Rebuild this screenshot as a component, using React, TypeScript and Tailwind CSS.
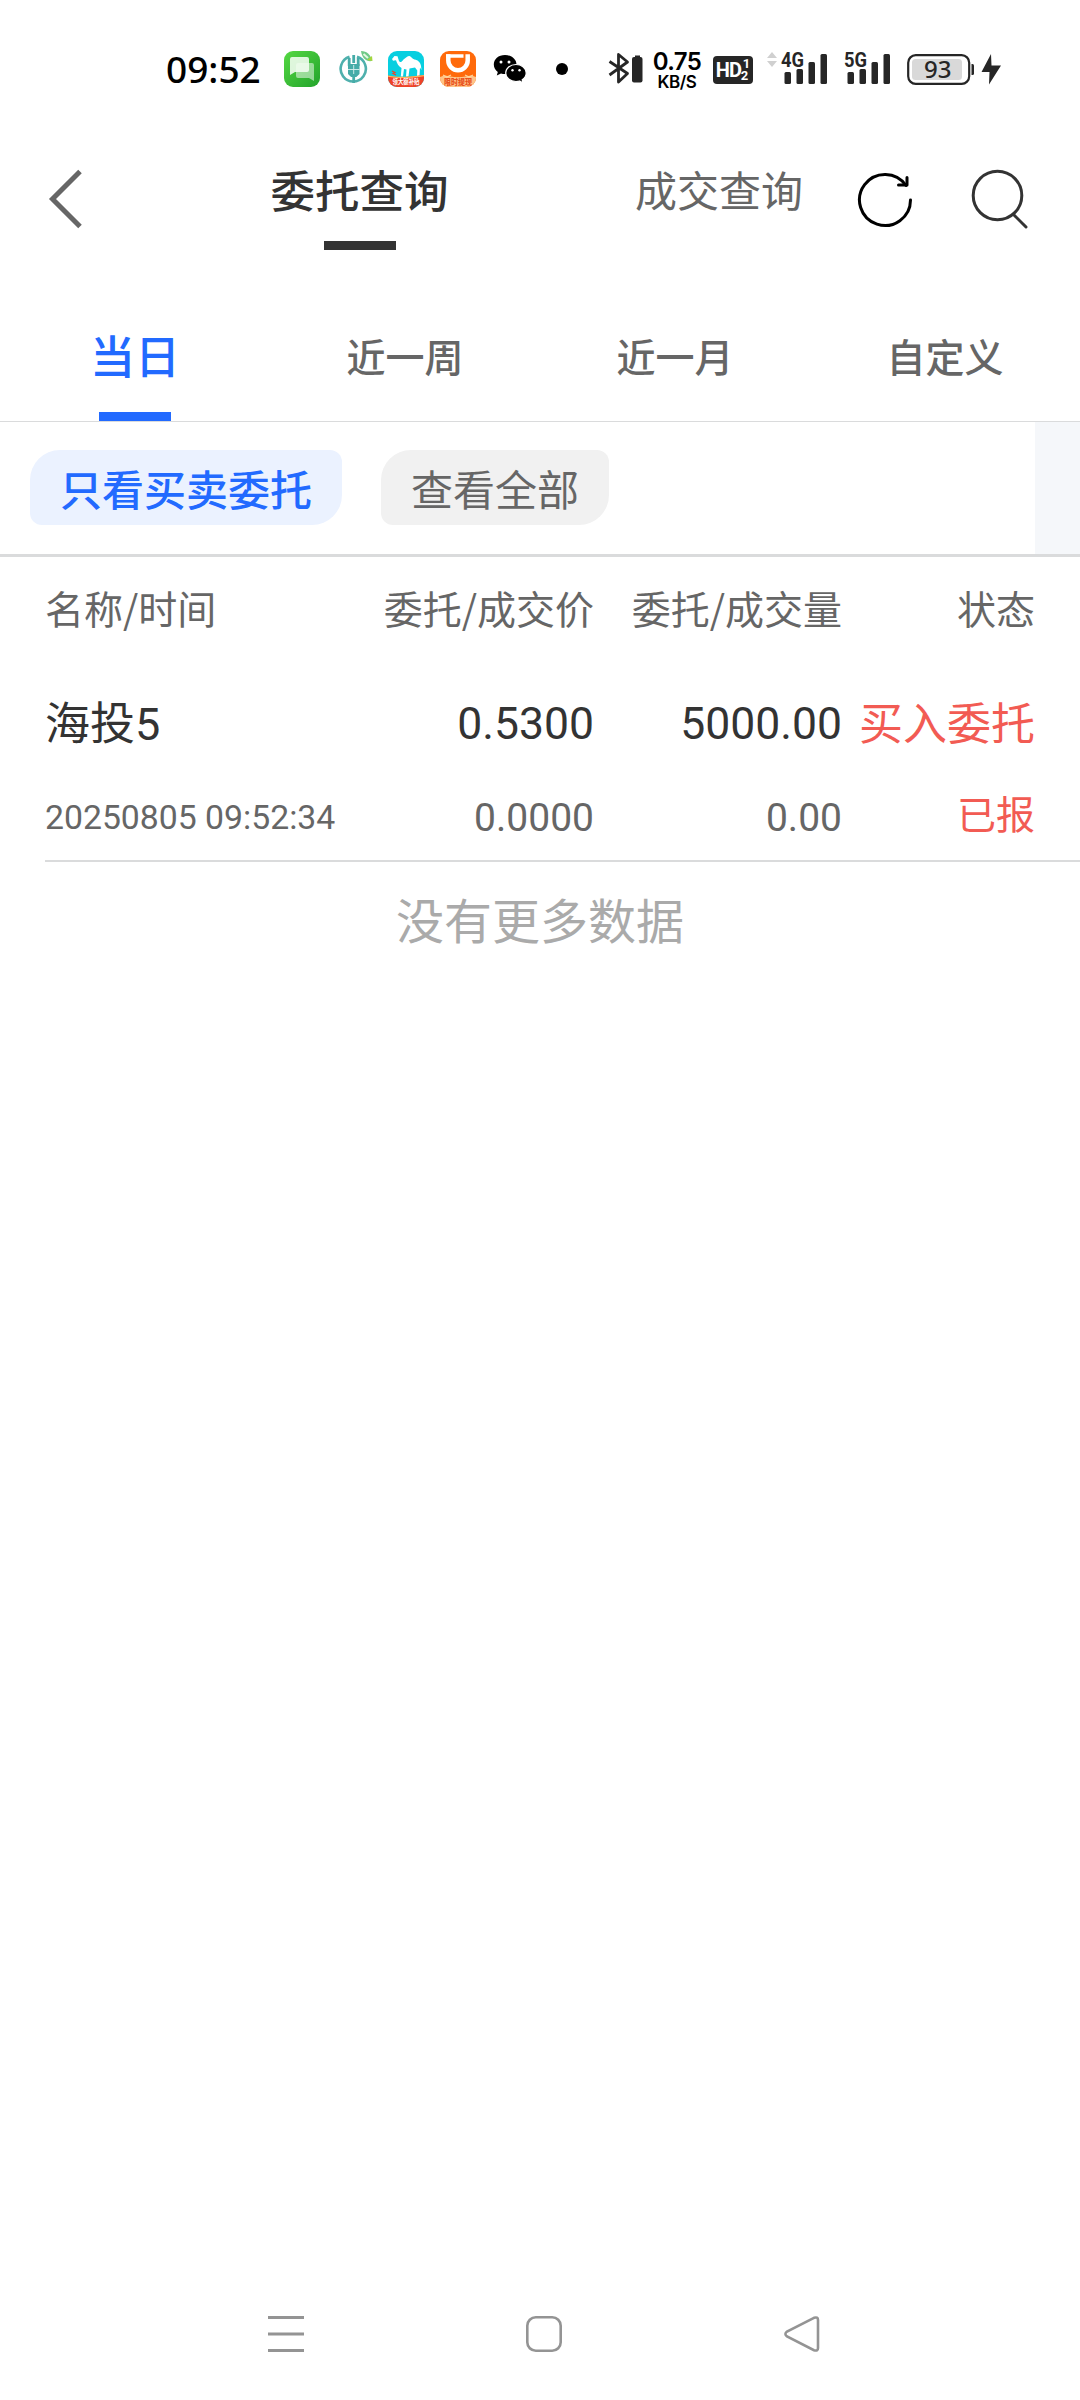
import { ReactNode, useState } from 'react';
import clsx from 'clsx';

type Order = {
  name: string;
  time: string;
  price: string;
  dealPrice: string;
  amount: string;
  dealAmount: string;
  side: string;
  status: string;
};

const periods = ['当日', '近一周', '近一月', '自定义'];
const filters = ['只看买卖委托', '查看全部'];

const orders: Order[] = [
  {
    name: '海投5',
    time: '20250805 09:52:34',
    price: '0.5300',
    dealPrice: '0.0000',
    amount: '5000.00',
    dealAmount: '0.00',
    side: '买入委托',
    status: '已报',
  },
];

/* STATUS BAR ICONS */
const MessageIcon = () => (
  <svg className="ml-[22px] shrink-0" width="36" height="36" viewBox="0 0 36 36">
    <defs>
      <linearGradient id="msg" x1="0" y1="0" x2="1" y2="1">
        <stop offset="0" stopColor="#55d843" />
        <stop offset="1" stopColor="#22a32b" />
      </linearGradient>
    </defs>
    <rect width="36" height="36" rx="9" fill="url(#msg)" />
    <path
      d="M14 12h14a2 2 0 0 1 2 2v16l-5-3H14a2 2 0 0 1-2-2V14a2 2 0 0 1 2-2z"
      fill="#fff"
      opacity="0.5"
    />
    <path
      d="M8 6h15a2 2 0 0 1 2 2v11a2 2 0 0 1-2 2H11l-5 3V8a2 2 0 0 1 2-2z"
      fill="#f4fdf2"
      opacity="0.88"
    />
  </svg>
);

const BankIcon = () => (
  <svg className="ml-[19px] shrink-0" width="34" height="36" viewBox="0 0 34 36">
    <path
      d="M10.5 5.8A12.6 12.6 0 1 0 18 5.8"
      fill="none"
      stroke="#4fb0ad"
      strokeWidth="2.6"
    />
    <path
      d="M10.2 7v8M14.7 22v10M19.2 7v8M14.7 4v8"
      fill="none"
      stroke="#46aca8"
      strokeWidth="2.8"
    />
    <path d="M9 13h11.5v10l-3.2 3h-5.2L9 23z" fill="#46aca8" />
    <path d="M9 18.5h11.5M14.7 14v9" stroke="#d9f0ef" strokeWidth="0.9" />
    <path d="M22 0c6 0 10 4 11 10-6 1-10-3-11-10z" fill="#6fc987" />
    <path d="M28 9l5-4 .5 5z" fill="#a5d63c" />
    <path d="M24.5 3l4.5 4" stroke="#e3f7e2" strokeWidth="2" />
  </svg>
);

const CamelIcon = () => (
  <svg className="ml-[15px] shrink-0" width="36" height="36" viewBox="0 0 36 36">
    <defs>
      <clipPath id="camel">
        <rect width="36" height="36" rx="9" />
      </clipPath>
    </defs>
    <g clipPath="url(#camel)">
      <rect width="36" height="36" fill="#08cfe0" />
      <path
        d="M4 8L6.5 5 9.5 5.2 11 10C12 12 14 11 15.5 8.5 17.500 7.500 19 4.500 21.500 5 23.500 5.500 24 8 26.500 8.500 30 9 32.500 11.500 33 15L33.500 19 32 16.500 31.500 25H29L29.300 19.500 27 16.500 21.500 17.500 20.500 25.500H18L18.500 18.500 16 18 15 25.500H12.800L13.500 17C10.500 15.500 9 12.500 8 9.300L5 9.800z"
        fill="#fff"
      />
      <path d="M0 24.500c10 3 22 1.500 36-.5v12H0z" fill="#ee4328" />
      <path d="M0 24.500c10 2.500 24 1 36-.5v1.200c-12 2-26 2.500-36 .5z" fill="#ffb45a" />
      <path d="M4 20l3 1.500-2 1 3 1.500" stroke="#ee4328" strokeWidth="1.200" fill="none" />
      <text
        x="18"
        y="33"
        fontSize="6.5"
        fontWeight="700"
        textAnchor="middle"
        textLength="27"
        lengthAdjust="spacingAndGlyphs"
        fill="#fff"
        className="font-['Noto_Sans_CJK_SC',sans-serif]"
      >
        领大额补贴
      </text>
    </g>
  </svg>
);

const RideIcon = () => (
  <svg className="ml-[16px] shrink-0" width="36" height="36" viewBox="0 0 36 36">
    <defs>
      <clipPath id="ride">
        <rect width="36" height="36" rx="9" />
      </clipPath>
    </defs>
    <g clipPath="url(#ride)">
      <rect width="36" height="36" fill="#ff6a0b" />
      <path
        d="M8.300 3.200V9.500a9.700 9.700 0 0 0 19.400 0V3.200"
        fill="none"
        stroke="#fff"
        strokeWidth="4.500"
      />
      <path d="M6.100 3.200H23.500V6.800H6.100z" fill="#fff" />
      <path d="M0 26c6-3 9 0 18 0s12-3 18 0v10H0z" fill="#ffc488" />
      <path d="M3 24l4 2 4-2M33 24l-4 2-4-2" stroke="#ffd49c" strokeWidth="1.200" fill="none" />
      <text
        x="18"
        y="33.5"
        fontSize="7.5"
        fontWeight="900"
        textAnchor="middle"
        textLength="28"
        lengthAdjust="spacingAndGlyphs"
        fill="#e8501a"
        className="font-['Noto_Sans_CJK_SC',sans-serif]"
      >
        限时提现
      </text>
    </g>
  </svg>
);

const WechatIcon = () => (
  <svg className="ml-[17px] shrink-0" width="34" height="36" viewBox="0 0 34 36">
    <path
      d="M12 4C5.4 4 .8 8.2.8 13.6c0 3.200 1.600 5.600 4 7.400L3.800 24.500l4.200-2c1.300.4 2.600.6 4 .6 6.600 0 11.500-4.200 11.500-9.500S18.600 4 12 4z"
      fill="#000"
    />
    <path
      d="M23 13.500c-5.800 0-10.300 3.700-10.300 8.500s4.500 8.500 10.300 8.500c1.300 0 2.500-.2 3.600-.5l3.400 2-.8-3.200c2.400-1.600 4-3.900 4-6.800 0-4.800-4.400-8.500-10.200-8.500z"
      fill="#000"
      stroke="#fff"
      strokeWidth="1.200"
    />
    <circle cx="8" cy="11" r="1.500" fill="#fff" />
    <circle cx="16" cy="11" r="1.500" fill="#fff" />
    <circle cx="19.500" cy="19.200" r="1.200" fill="#fff" />
    <circle cx="26.500" cy="19.200" r="1.200" fill="#fff" />
  </svg>
);

const BluetoothIcon = () => (
  <svg className="ml-[40px] shrink-0" width="35" height="36" viewBox="0 0 35 36">
    <path
      d="M1.500 10.500l18 12-9 8.500V3.500l9 7.500-18 13"
      fill="none"
      stroke="#262626"
      strokeWidth="2.800"
      strokeLinejoin="round"
    />
    <rect x="24" y="6" width="10.500" height="25.500" rx="2" fill="#262626" />
    <rect x="27" y="4.500" width="5" height="2" fill="#262626" />
  </svg>
);

const SignalIcon = ({ label, className }: { label: string; className: string }) => (
  <svg className={clsx('shrink-0 overflow-visible', className)} width="47" height="36" viewBox="0 0 47 36">
    <text
      x="0"
      y="16"
      fontSize="20.500"
      fontWeight="700"
      textLength="23"
      lengthAdjust="spacingAndGlyphs"
      fill="#262626"
      className="font-[Roboto,sans-serif]"
    >
      {label}
    </text>
    <g fill="#262626">
      <rect x="3.500" y="21" width="6.500" height="12" rx="1.500" />
      <rect x="15.500" y="18" width="6.500" height="15" rx="1.500" />
      <rect x="27.500" y="11" width="6.500" height="22" rx="1.500" />
      <rect x="39.500" y="3" width="6.500" height="30" rx="1.500" />
    </g>
  </svg>
);

const BatteryIcon = () => (
  <svg className="ml-[16px] shrink-0" width="96" height="36" viewBox="0 0 96 36">
    <rect
      x="1.200"
      y="4.200"
      width="61"
      height="28.600"
      rx="7.500"
      fill="none"
      stroke="#262626"
      strokeWidth="2.200"
    />
    <rect x="5" y="8" width="50" height="21" rx="3.500" fill="#d9d9d9" />
    <path d="M64.500 13h1a1.500 1.500 0 0 1 1.500 1.500v8a1.500 1.500 0 0 1-1.500 1.500h-1z" fill="#262626" />
    <text
      x="17"
      y="27"
      fontSize="24"
      fontWeight="500"
      textLength="27.5"
      lengthAdjust="spacingAndGlyphs"
      fill="#262626"
      className="font-['Noto_Sans',sans-serif]"
    >
      93
    </text>
    <path d="M84 3L74.500 21h8l-.5 12.500L94 14.500h-9.500z" fill="#262626" />
  </svg>
);

const StatusBar = () => (
  <div className="flex h-[140px] items-start pt-[51px] pl-[166px] text-black">
    <span className="-mt-px w-[96px] shrink-0 font-['Noto_Sans',sans-serif] text-[37px] leading-[37px] font-medium">
      09:52
    </span>
    <MessageIcon />
    <BankIcon />
    <CamelIcon />
    <RideIcon />
    <WechatIcon />
    <span className="mt-3 ml-[29px] h-3 w-3 shrink-0 rounded-full bg-black" />
    <BluetoothIcon />
    <span className="ml-[10px] flex w-[48px] shrink-0 flex-col items-center font-[Inter,sans-serif] font-semibold">
      <span className="text-[24px] leading-[22px] tracking-tight">0.75</span>
      <span className="text-[17px] leading-[18px] tracking-tight">KB/S</span>
    </span>
    <div className="mt-[5px] ml-[12px] flex h-7 w-10 shrink-0 items-center justify-center bg-[#262626] rounded font-[Roboto,sans-serif] font-bold text-white">
      <span className="w-[25px] text-[20px] leading-7 tracking-[-1px]">HD</span>
      <span className="flex flex-col text-[13px] leading-[12px]">
        <span className="pl-0.5">1</span>
        <span>2</span>
      </span>
    </div>
    <svg className="ml-[14px] shrink-0" width="10" height="36" viewBox="0 0 10 36">
      <path d="M5 1l5 6H0zM5 16l5-6H0z" fill="#d0d0d0" />
    </svg>
    <SignalIcon label="4G" className="ml-[4px]" />
    <SignalIcon label="5G" className="ml-[16px]" />
    <BatteryIcon />
  </div>
);

/* HEADER */
const Header = () => (
  <header className="flex h-[140px] items-start">
    <svg className="mt-[29px] ml-[48px] shrink-0" width="36" height="60" viewBox="0 0 36 60">
      <path d="M32 2.500L4.500 30 32 57.500" fill="none" stroke="#666" strokeWidth="5" />
    </svg>
    <button className="ml-[155px] flex h-[110px] w-[241px] flex-col items-center text-[44.5px] leading-[98px] font-medium text-[#333]">
      委托查询
      <span className="mt-[3px] h-[9px] w-[72px] bg-[#333]" />
    </button>
    <button className="ml-[119px] h-[110px] w-[240px] pb-[13px] text-[42px] leading-[98px] text-[#666]">
      成交查询
    </button>
    <svg
      className="mt-[32px] ml-[18px] shrink-0"
      width="56"
      height="56"
      viewBox="0 0 56 56"
      fill="none"
      stroke="#000"
      strokeWidth="3"
      strokeLinecap="round"
      strokeLinejoin="round"
    >
      <path d="M53.500 28A25.500 25.500 0 1 1 49 13.500" />
      <path d="M50 5.500V13H41.500" />
    </svg>
    <svg
      className="mt-[29px] ml-[58px] shrink-0"
      width="60"
      height="60"
      viewBox="0 0 60 60"
      fill="none"
      stroke="#333"
      strokeWidth="3"
      strokeLinecap="round"
    >
      <circle cx="26.500" cy="26.500" r="24.300" />
      <path d="M42.500 45.500l12.500 12.500" />
    </svg>
  </header>
);

const Cell = ({ children, className }: { children: ReactNode; className?: string }) => (
  <div className={clsx('flex flex-col items-end whitespace-nowrap', className)}>{children}</div>
);

const NavBar = () => (
  <nav className="flex h-[100px] items-start gap-[220px] pt-[15px] pl-[267px]">
    <svg className="shrink-0" width="38" height="38" viewBox="0 0 38 38">
      <path d="M1 2.500h36M1 19h36M1 35.500h36" stroke="#949494" strokeWidth="3" />
    </svg>
    <svg className="shrink-0" width="38" height="38" viewBox="0 0 38 38">
      <rect x="2.300" y="2.300" width="33.400" height="33.400" rx="8.500" fill="none" stroke="#949494" strokeWidth="2.600" />
    </svg>
    <svg className="shrink-0" width="38" height="38" viewBox="0 0 38 38">
      <path
        d="M31 2.800L4 16.500Q.8 19 4 21.500L31 35.200Q35 36.500 35 33V5Q35 1.500 31 2.800z"
        fill="none"
        stroke="#949494"
        strokeWidth="2.600"
      />
    </svg>
  </nav>
);

const App = () => {
  // STATES
  const [period, setPeriod] = useState<string>(periods[0]);
  const [filter, setFilter] = useState<string>(filters[0]);

  return (
    <div className="flex h-[2400px] w-[1080px] flex-col overflow-hidden bg-white font-['Noto_Sans_CJK_SC',sans-serif]">
      <StatusBar />
      <Header />

      {/* period tabs */}
      <div className="grid h-[142px] grid-cols-4 border-b border-[#dadbdc]">
        {periods.map((item) => (
          <button
            key={item}
            onClick={() => setPeriod(item)}
            className={clsx(
              'flex flex-col items-center justify-between leading-[150px] font-medium',
              item === period ? 'text-[45px] text-[#226aff]' : 'text-[39px] text-[#666]'
            )}
          >
            <span className="h-[132px]">{item}</span>
            {item === period && <span className="h-[9px] w-[72px] bg-[#226aff]" />}
          </button>
        ))}
      </div>

      {/* filters */}
      <div className="flex h-[135px] border-b-[3px] border-[#dadbdc]">
        <div className="flex grow items-start gap-[39px] pt-[28px] pl-[30px]">
          {filters.map((item) => (
            <button
              key={item}
              onClick={() => setFilter(item)}
              className={clsx(
                'h-[75px] rounded-tl-[30px] rounded-tr-[12px] rounded-br-[30px] rounded-bl-[12px] px-[30px] text-[42px] leading-[75px]',
                item === filter
                  ? 'bg-[#ebf2ff] font-medium text-[#226aff]'
                  : 'bg-[#f1f1f1] text-[#666]'
              )}
            >
              {item}
            </button>
          ))}
        </div>
        <div className="w-[45px] bg-[#f5f7fa]" />
      </div>

      {/* table head */}
      <div className="grid h-[108px] grid-cols-[301px_248px_248px_193px] pl-[45px] text-[39px] leading-[101px] text-[#666]">
        <Cell className="items-start">名称/时间</Cell>
        <Cell>委托/成交价</Cell>
        <Cell>委托/成交量</Cell>
        <Cell>状态</Cell>
      </div>

      {/* orders */}
      {orders.map((order) => (
        <div
          key={order.time}
          className="ml-[45px] grid h-[197px] grid-cols-[301px_248px_248px_193px] border-b-2 border-[#dadbdc] font-[Roboto,'Noto_Sans_CJK_SC',sans-serif] text-[44.5px] text-[#333]"
        >
          <Cell className="items-start">
            <p className="text-[45px] leading-[119px]">{order.name}</p>
            <p className="text-[33.75px] leading-[67px] text-[#666]">{order.time}</p>
          </Cell>
          <Cell>
            <p className="leading-[119px]">{order.price}</p>
            <p className="text-[39px] leading-[68px] text-[#666]">{order.dealPrice}</p>
          </Cell>
          <Cell>
            <p className="leading-[119px]">{order.amount}</p>
            <p className="text-[39px] leading-[68px] text-[#666]">{order.dealAmount}</p>
          </Cell>
          <Cell className="text-[#f25b53]">
            <p className="text-[44px] leading-[120px]">{order.side}</p>
            <p className="text-[39px] leading-[62px]">{order.status}</p>
          </Cell>
        </div>
      ))}

      <p className="grow text-center text-[48px] leading-[113px] text-[#aaa]">没有更多数据</p>

      <NavBar />
    </div>
  );
};

export default App;
